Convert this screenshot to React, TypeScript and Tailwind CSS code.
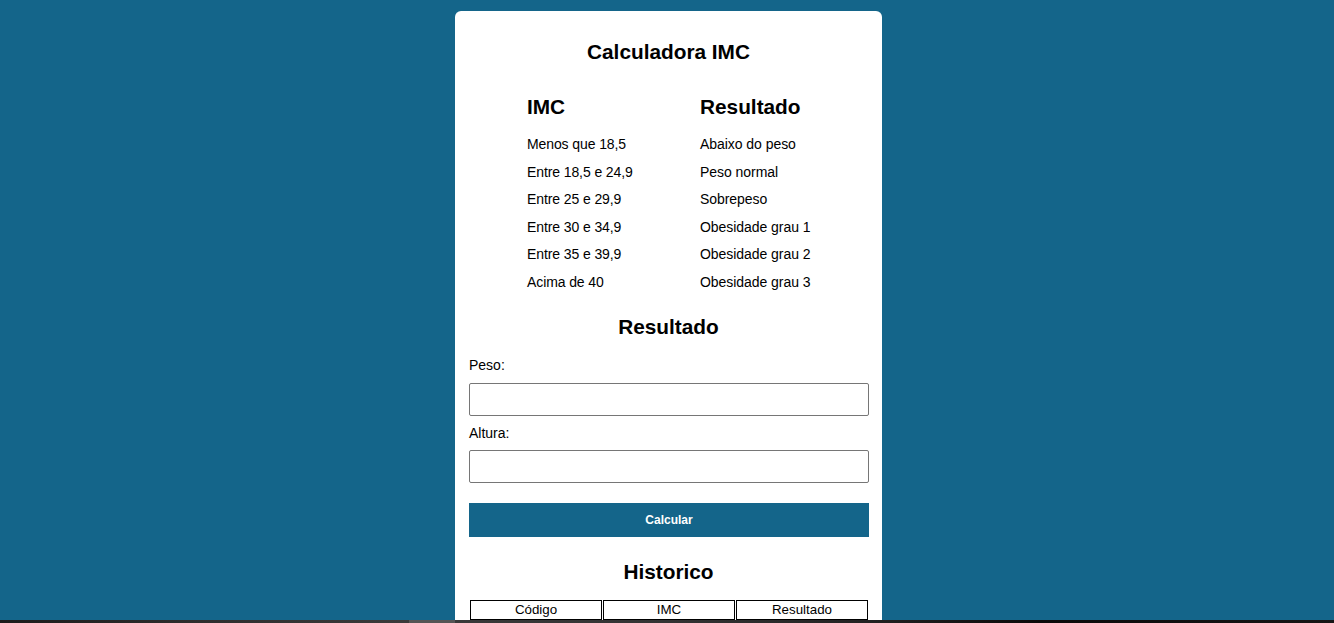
import React from "react";

const tabela: [string, string][] = [
  ["Menos que 18,5", "Abaixo do peso"],
  ["Entre 18,5 e 24,9", "Peso normal"],
  ["Entre 25 e 29,9", "Sobrepeso"],
  ["Entre 30 e 34,9", "Obesidade grau 1"],
  ["Entre 35 e 39,9", "Obesidade grau 2"],
  ["Acima de 40", "Obesidade grau 3"],
];

export default function App() {
  return (
    <div
      className="min-h-screen bg-[#14658a] text-black pt-[11px] pb-10 flex justify-center pl-[3px]"
      style={{ fontFamily: '"Liberation Sans", Arial, sans-serif' }}
    >
      <div className="w-[427px] bg-white rounded-[6px] px-[14px] pt-[29px] pb-[30px] flex flex-col">
        <h1 className="text-[20.8px] leading-[24px] font-bold text-center">Calculadora IMC</h1>

        <div className="flex justify-center mt-[31px]">
          <div className="w-[173px] flex flex-col">
            <h2 className="text-[20.8px] leading-[24px] font-bold">IMC</h2>
            <div className="mt-[12px] flex flex-col">
              {tabela.map(([a]) => (
                <div key={a} className="text-[14px] leading-[27.5px] tracking-[-0.1px]">{a}</div>
              ))}
            </div>
          </div>
          <div className="w-[110px] flex flex-col">
            <h2 className="text-[20.8px] leading-[24px] font-bold">Resultado</h2>
            <div className="mt-[12px] flex flex-col">
              {tabela.map(([, b]) => (
                <div key={b} className="text-[14px] leading-[27.5px] whitespace-nowrap tracking-[-0.05px]">{b}</div>
              ))}
            </div>
          </div>
        </div>

        <h2 className="text-[20.8px] leading-[24px] font-bold text-center mt-[19px]">Resultado</h2>

        <label className="text-[14px] leading-[16px] mt-[18px]">Peso:</label>
        <input
          type="text"
          className="mt-[10px] h-[33px] w-[400px] border border-[#767676] rounded-[2px] bg-white"
        />
        <label className="text-[14px] leading-[16px] mt-[9px]">Altura:</label>
        <input
          type="text"
          className="mt-[9px] h-[33px] w-[400px] border border-[#767676] rounded-[2px] bg-white"
        />

        <button className="mt-[20px] h-[34px] w-[400px] bg-[#14658a] text-white text-[12px] font-bold">
          Calcular
        </button>

        <h2 className="text-[20.8px] leading-[24px] font-bold text-center mt-[23px]">Historico</h2>

        <div className="mt-[16px] px-[1px] grid grid-cols-[132px_132px_132px] gap-[1px]">
          {["Código", "IMC", "Resultado"].map((h) => (
            <div
              key={h}
              className="border border-black h-[20px] text-[13.33px] leading-[18px] text-center"
            >
              {h}
            </div>
          ))}
        </div>
        <div className="mt-[2px] px-[1px] grid grid-cols-[132px_132px_132px] gap-[1px]">
          {["", "", ""].map((h, i) => (
            <div key={i} className="border border-black h-[20px] text-[13.33px] leading-[18px] text-center">
              {h}
            </div>
          ))}
        </div>
      </div>

      <div className="fixed bottom-0 left-0 w-full h-[3px] bg-[linear-gradient(to_right,#1c1c1c_0%,#2e2e2e_15%,#3a3a3a_30%,#333_50%,#222_65%,#0a0a0a_78%,#111_90%,#161616_100%)]">
        <div className="absolute left-[409px] top-0 h-[3px] w-[46px] bg-[#555]" />
      </div>
    </div>
  );
}
